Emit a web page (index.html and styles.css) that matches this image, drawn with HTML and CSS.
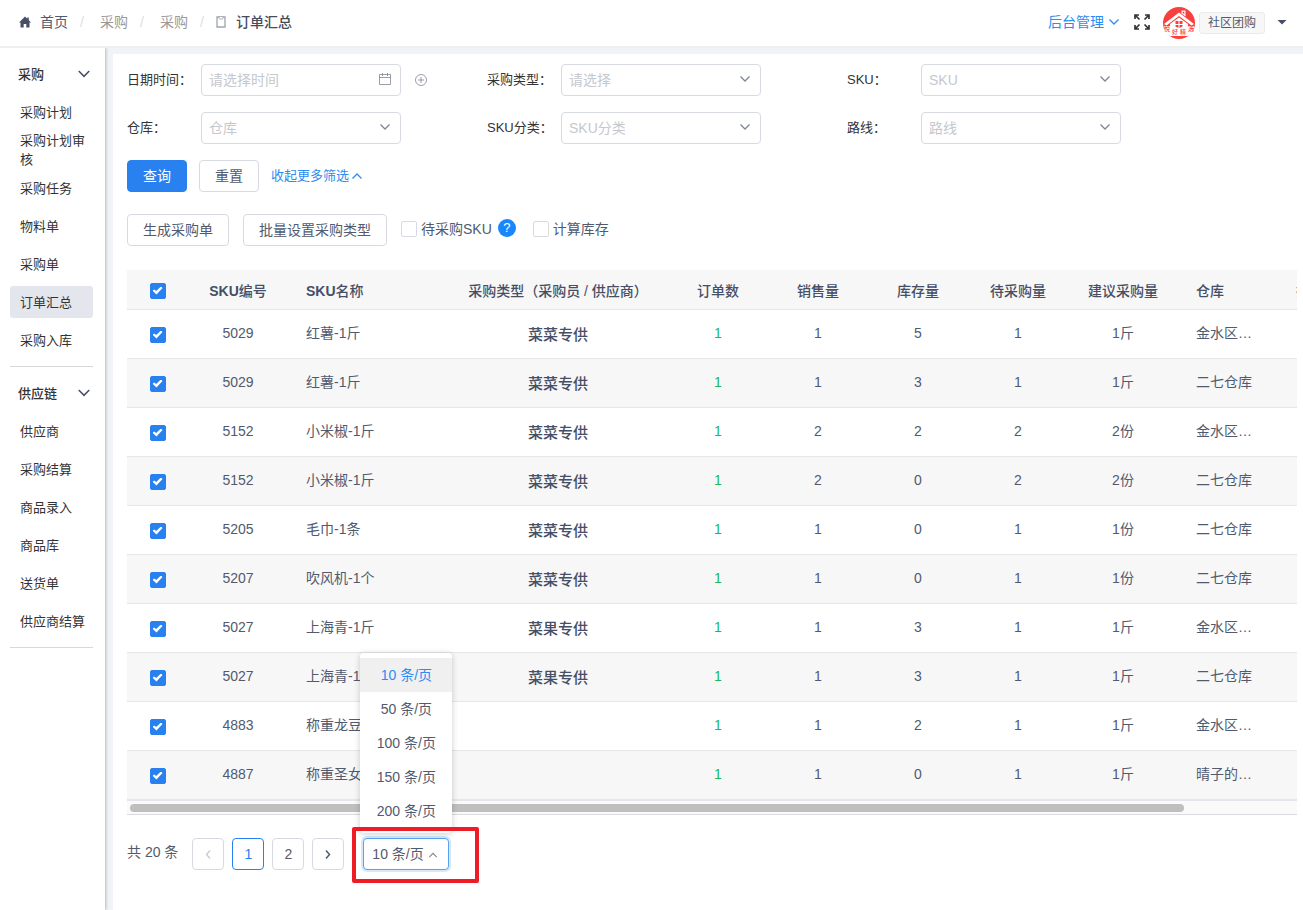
FILE: index.html
```html
<!DOCTYPE html>
<html lang="zh-CN">
<head>
	<meta charset="UTF-8">
	<meta name="viewport" content="width=device-width, initial-scale=1">
	<title>订单汇总</title>
	<link rel="stylesheet" href="styles.css">
</head>
<body>
	<!-- 公用图标 -->
	<svg class="sprite" aria-hidden="true">
		<symbol id="down" viewBox="0 0 12 12"><path d="M1.500 3.500 6 8l4.500-4.500" fill="none" stroke="currentColor" stroke-width="1.300"/></symbol>
		<symbol id="up" viewBox="0 0 12 12"><path d="M1.500 8.500 6 4l4.500 4.500" fill="none" stroke="currentColor" stroke-width="1.300"/></symbol>
	</svg>

	<!-- 顶部 -->
	<header class="header">
		<nav class="crumb">
			<svg class="home" viewBox="0 0 12 12"><path d="M6 .5 0 6.500h1.500V11.500h3.200V8h2.600v3.500h3.200v-5H12L9.800 4.300V1.500H8.300v1.300z" fill="currentColor"/></svg>
			<a href="#">首页</a>
			<i>/</i>
			<a href="#" class="gray">采购</a>
			<i>/</i>
			<a href="#" class="gray">采购</a>
			<i>/</i>
			<svg class="clip" viewBox="0 0 10 12"><path d="M1 1h8v10H1z" fill="none" stroke="currentColor" stroke-width="1.300"/><path d="M2.500.5h5L6.500 3h-3z" fill="#fff" stroke="currentColor" stroke-width=".8"/></svg>
			<span class="now">订单汇总</span>
		</nav>
		<div class="user">
			<a href="#" class="admin">后台管理 <svg class="ico"><use href="#down"/></svg></a>
			<button type="button" class="full" aria-label="全屏">
				<svg viewBox="0 0 16 16"><path d="M5 1H1v4M1 1l4.500 4.500M11 1h4v4M15 1l-4.500 4.500M5 15H1v-4M1 15l4.500-4.500M11 15h4v-4M15 15l-4.500-4.500" fill="none" stroke="currentColor" stroke-width="1.700"/></svg>
			</button>
			<svg class="logo" viewBox="0 0 32 32">
				<circle cx="16" cy="16" r="16" fill="#f8403e"/>
				<path d="M1 17 16 5.500 31 17l-2.500 1.500L16 9 3.500 18.500z" fill="#fff"/>
				<path d="M18.500 3.500h4v6l-4-3z" fill="#fff"/>
				<path d="M19.700 4.700h1.600v2.600l-1.600-1.200z" fill="#f8403e"/>
				<path d="M7 17 16 10.500 25 17v9H7z" fill="#fff"/>
				<path d="M1 19h7v2h16v-2h7l-1 7-5 3H7l-5-3z" fill="#fff"/>
				<path d="M12.500 14h3v3h-3zM16.500 14h3v3h-3zM12.500 18h3v3l-3-1.500zM16.500 18h3v1.500l-3 1.500z" fill="#f8403e"/>
				<g class="logo-text"><text x="1" y="24">悦</text><text x="9" y="27">好</text><text x="17" y="27">精</text><text x="25" y="24">选</text></g>
			</svg>
			<span class="tag">社区团购</span>
			<button type="button" class="caret" aria-label="更多"></button>
		</div>
	</header>

	<div class="wrap">
		<!-- 左侧菜单 -->
		<aside class="side">
			<div class="group">
				<h3>采购 <svg class="ico"><use href="#down"/></svg></h3>
				<ul>
					<li><a href="#">采购计划</a></li>
					<li><a href="#">采购计划审核</a></li>
					<li><a href="#">采购任务</a></li>
					<li><a href="#">物料单</a></li>
					<li><a href="#">采购单</a></li>
					<li><a href="#" class="active">订单汇总</a></li>
					<li><a href="#">采购入库</a></li>
				</ul>
			</div>
			<div class="group">
				<h3>供应链 <svg class="ico"><use href="#down"/></svg></h3>
				<ul>
					<li><a href="#">供应商</a></li>
					<li><a href="#">采购结算</a></li>
					<li><a href="#">商品录入</a></li>
					<li><a href="#">商品库</a></li>
					<li><a href="#">送货单</a></li>
					<li><a href="#">供应商结算</a></li>
				</ul>
			</div>
		</aside>

		<main class="main">
			<!-- 筛选 -->
			<form class="filter">
				<div class="field">
					<label for="date">日期时间：</label>
					<div class="ctrl">
						<input type="text" id="date" placeholder="请选择时间" autocomplete="off">
						<svg class="ico cal" viewBox="0 0 12 12"><path d="M.5 1.500h11v10H.5zM.5 4.500h11M3.500 0v3M8.500 0v3" fill="none" stroke="currentColor" stroke-width=".8"/></svg>
					</div>
					<button type="button" class="plus" aria-label="添加"><svg viewBox="0 0 12 12"><circle cx="6" cy="6" r="5.500" fill="none" stroke="currentColor" stroke-width=".8"/><path d="M6 3v6M3 6h6" stroke="currentColor" stroke-width=".8"/></svg></button>
				</div>
				<div class="field">
					<label for="type">采购类型：</label>
					<div class="ctrl"><select id="type"><option>请选择</option></select><svg class="ico"><use href="#down"/></svg></div>
				</div>
				<div class="field">
					<label for="sku">SKU：</label>
					<div class="ctrl"><select id="sku"><option>SKU</option></select><svg class="ico"><use href="#down"/></svg></div>
				</div>
				<div class="field">
					<label for="store">仓库：</label>
					<div class="ctrl"><select id="store"><option>仓库</option></select><svg class="ico"><use href="#down"/></svg></div>
				</div>
				<div class="field">
					<label for="cate">SKU分类：</label>
					<div class="ctrl"><select id="cate"><option>SKU分类</option></select><svg class="ico"><use href="#down"/></svg></div>
				</div>
				<div class="field">
					<label for="line">路线：</label>
					<div class="ctrl"><select id="line"><option>路线</option></select><svg class="ico"><use href="#down"/></svg></div>
				</div>
			</form>
			<div class="search">
				<button type="button" class="btn primary">查询</button>
				<button type="button" class="btn">重置</button>
				<a href="#" class="more">收起更多筛选<svg class="ico"><use href="#up"/></svg></a>
			</div>

			<!-- 操作 -->
			<div class="action">
				<button type="button" class="btn">生成采购单</button>
				<button type="button" class="btn">批量设置采购类型</button>
				<div class="checks">
					<label><input type="checkbox">待采购SKU</label>
					<span class="help">?</span>
					<label><input type="checkbox">计算库存</label>
				</div>
			</div>

			<!-- 列表 -->
			<div class="table-box">
				<table>
					<colgroup>
						<col class="w-check"><col class="w-num"><col class="w-name"><col class="w-type"><col class="w-num"><col class="w-num"><col class="w-num"><col class="w-num"><col class="w-advice"><col class="w-num"><col>
					</colgroup>
					<thead>
						<tr>
							<th><input type="checkbox" aria-label="全选" checked></th>
							<th><b>SKU</b>编号</th>
							<th class="left"><b>SKU</b>名称</th>
							<th>采购类型（采购员 / 供应商）</th>
							<th>订单数</th>
							<th>销售量</th>
							<th>库存量</th>
							<th>待采购量</th>
							<th>建议采购量</th>
							<th class="left">仓库</th>
							<th class="left">操作</th>
						</tr>
					</thead>
					<tbody>
						<tr><td><input type="checkbox" aria-label="选择" checked></td><td>5029</td><td class="left">红薯-1斤</td><td class="type">菜菜专供</td><td class="green">1</td><td>1</td><td>5</td><td>1</td><td>1斤</td><td class="left">金水区…</td><td></td></tr>
						<tr><td><input type="checkbox" aria-label="选择" checked></td><td>5029</td><td class="left">红薯-1斤</td><td class="type">菜菜专供</td><td class="green">1</td><td>1</td><td>3</td><td>1</td><td>1斤</td><td class="left">二七仓库</td><td></td></tr>
						<tr><td><input type="checkbox" aria-label="选择" checked></td><td>5152</td><td class="left">小米椒-1斤</td><td class="type">菜菜专供</td><td class="green">1</td><td>2</td><td>2</td><td>2</td><td>2份</td><td class="left">金水区…</td><td></td></tr>
						<tr><td><input type="checkbox" aria-label="选择" checked></td><td>5152</td><td class="left">小米椒-1斤</td><td class="type">菜菜专供</td><td class="green">1</td><td>2</td><td>0</td><td>2</td><td>2份</td><td class="left">二七仓库</td><td></td></tr>
						<tr><td><input type="checkbox" aria-label="选择" checked></td><td>5205</td><td class="left">毛巾-1条</td><td class="type">菜菜专供</td><td class="green">1</td><td>1</td><td>0</td><td>1</td><td>1份</td><td class="left">二七仓库</td><td></td></tr>
						<tr><td><input type="checkbox" aria-label="选择" checked></td><td>5207</td><td class="left">吹风机-1个</td><td class="type">菜菜专供</td><td class="green">1</td><td>1</td><td>0</td><td>1</td><td>1份</td><td class="left">二七仓库</td><td></td></tr>
						<tr><td><input type="checkbox" aria-label="选择" checked></td><td>5027</td><td class="left">上海青-1斤</td><td class="type">菜果专供</td><td class="green">1</td><td>1</td><td>3</td><td>1</td><td>1斤</td><td class="left">金水区…</td><td></td></tr>
						<tr><td><input type="checkbox" aria-label="选择" checked></td><td>5027</td><td class="left">上海青-1斤</td><td class="type">菜果专供</td><td class="green">1</td><td>1</td><td>3</td><td>1</td><td>1斤</td><td class="left">二七仓库</td><td></td></tr>
						<tr><td><input type="checkbox" aria-label="选择" checked></td><td>4883</td><td class="left">称重龙豆</td><td></td><td class="green">1</td><td>1</td><td>2</td><td>1</td><td>1斤</td><td class="left">金水区…</td><td></td></tr>
						<tr><td><input type="checkbox" aria-label="选择" checked></td><td>4887</td><td class="left">称重圣女</td><td></td><td class="green">1</td><td>1</td><td>0</td><td>1</td><td>1斤</td><td class="left">晴子的…</td><td></td></tr>
					</tbody>
				</table>
			</div>
			<div class="scroll"><div class="thumb"></div></div>

			<!-- 分页 -->
			<div class="pager">
				<span class="total">共 20 条</span>
				<button type="button" class="page off" aria-label="上一页" disabled><svg viewBox="0 0 12 12"><path d="M8 2.500 4.500 6.500 8 10.500" fill="none" stroke="currentColor" stroke-width="1.200"/></svg></button>
				<button type="button" class="page on">1</button>
				<button type="button" class="page">2</button>
				<button type="button" class="page" aria-label="下一页"><svg viewBox="0 0 12 12"><path d="M4 2.500 7.500 6.500 4 10.500" fill="none" stroke="currentColor" stroke-width="1.500"/></svg></button>
				<div class="size">
					<select aria-label="每页条数"><option>10 条/页</option><option>50 条/页</option><option>100 条/页</option><option>150 条/页</option><option>200 条/页</option></select>
					<svg class="ico"><use href="#up"/></svg>
					<ul class="menu">
						<li class="active">10 条/页</li>
						<li>50 条/页</li>
						<li>100 条/页</li>
						<li>150 条/页</li>
						<li>200 条/页</li>
					</ul>
					<div class="mark"></div>
				</div>
			</div>
		</main>
	</div>
</body>
</html>
```

FILE: styles.css
```css
*{box-sizing:border-box;}
ul,h3{list-style:none;margin:0;padding:0;}
a{color:inherit;text-decoration:none;}
i{font-style:normal;}
body{display:flex;flex-direction:column;min-height:100vh;margin:0;background:#f0f4f8;color:#515a6e;font:14px/20px "Liberation Sans","Noto Sans CJK SC",sans-serif;overflow-x:hidden;}
button,input,select{font:inherit;color:inherit;margin:0;}
button{cursor:pointer;}
.sprite{position:absolute;width:0;height:0;}
.ico{width:12px;height:12px;flex:none;}

/* 顶部 */
.header{display:flex;justify-content:space-between;align-items:center;height:48px;padding:0 16px 2px 19px;background:#fff;border-bottom:2px solid #efefef;}
.crumb,.user{display:flex;align-items:center;}
.crumb i{width:32px;text-align:center;color:#dcdee2;padding-right:4px;}
.crumb .home{width:12px;height:12px;margin-right:9px;color:#464f66;}
.crumb .gray{color:#999;}
.crumb .clip{width:10px;height:12px;margin:0 10px 0 -4px;color:#a0a4ad;}
.crumb .now{font-weight:500;color:#464c5b;}
.admin{display:flex;align-items:center;gap:4px;color:#2d8cf0;}
.full{width:16px;height:16px;margin:0 13px 0 14px;padding:0;border:0;background:none;color:#333;}
.full svg{display:block;}
.logo{width:32px;height:32px;margin-top:2px;}
.logo-text{fill:#f8403e;font-size:6px;font-weight:500;}
.tag{height:22px;margin:2px 12px 0 4px;padding:0 8px;border:1px solid #e8eaec;border-radius:3px;background:#f7f7f7;font-size:12px;line-height:20px;}
.caret{width:10px;height:5px;padding:0;border:0;background:#464f66;clip-path:polygon(0 0,100% 0,50% 100%);}

/* 左侧菜单 */
.wrap{display:flex;flex:1;}
.side{flex:none;width:105px;padding:0 12px 0 10px;background:#fff;box-shadow:1px 0 3px rgba(0,0,0,.25);clip-path:inset(0 -5px 0 0);font-size:13px;line-height:19px;color:#333;}
.group{padding-bottom:4px;border-bottom:1px solid #d8d8d8;}
.group h3{display:flex;justify-content:space-between;align-items:center;height:48px;padding:4px 2px 0 8px;font-size:13px;font-weight:500;}
.group h3 .ico{width:14px;height:14px;color:#464f66;}
.group a{display:flex;align-items:center;height:32px;margin-bottom:6px;padding:0 8px 0 10px;border-radius:3px;}
.group a.active{background:#e4e6ee;}

/* 内容 */
.main{flex:1;min-width:0;margin:6px 0 0 8px;padding:10px 6px 0 14px;background:#fff;}
.filter{display:grid;grid-template-columns:repeat(3,360px);gap:16px 0;}
.field{display:flex;align-items:center;}
.field label{width:74px;font-size:13px;color:#333;}
.ctrl{position:relative;width:200px;}
.ctrl input,.ctrl select{display:block;width:100%;height:32px;padding:0 7px;border:1px solid #d7dae0;border-radius:4px;background:#fff;color:#c5c8ce;appearance:none;}
.ctrl input::placeholder{color:#c5c8ce;}
.ctrl .ico{position:absolute;top:9px;right:10px;color:#808695;pointer-events:none;}
.plus{width:12px;height:12px;margin-left:14px;padding:0;border:0;background:none;color:#808695;}
.plus svg{display:block;}
.search{display:flex;align-items:center;gap:12px;margin-top:16px;}
.btn{height:32px;padding:0 15px;border:1px solid #d7dae0;border-radius:4px;background:#fff;}
.btn.primary{border-color:#2981f0;background:#2981f0;color:#fff;}
.more{display:flex;align-items:center;gap:2px;font-size:13px;color:#2d8cf0;}
.action{display:flex;align-items:center;gap:14px;margin-top:22px;}
.checks{display:flex;align-items:center;padding-bottom:2px;}
.checks label{display:flex;align-items:center;gap:4px;}
.help{width:18px;height:18px;margin:0 17px 2px 6px;border-radius:50%;background:#1a86fc;color:#fff;font-size:13px;line-height:18px;text-align:center;}
input[type=checkbox]{display:block;width:16px;height:16px;border:1px solid #d7dae0;border-radius:2px;background:#fff;appearance:none;}
input[type=checkbox]:checked{border-color:#2981f0;background:#2981f0;}
input[type=checkbox]:checked::after{content:"";display:block;width:10px;height:8px;margin:3px 2px;background:#fff;clip-path:polygon(0 53%,16% 36%,37% 56%,84% 0,100% 18%,40% 100%);}

/* 列表 */
.table-box{margin-top:24px;overflow:hidden;}
table{width:1300px;table-layout:fixed;border-collapse:separate;border-spacing:0;}
.w-check{width:61px;}
.w-num{width:100px;}
.w-name{width:160px;}
.w-type{width:220px;}
.w-advice{width:110px;}
th,td{padding:0;border-bottom:1px solid #e4e6e9;text-align:center;white-space:nowrap;}
th{height:40px;padding-top:2px;background:#f7f7f7;font-weight:500;color:#464f66;}
th b{font-weight:700;}
td{height:49px;padding-bottom:2px;}
td:first-child,td.type{padding:1px 0 0;}
tr:nth-child(even) td{background:#f7f7f7;}
th.left,td.left{padding-left:18px;text-align:left;}
th input[type=checkbox],td input[type=checkbox]{margin:0 auto;}
td.type{font-size:15px;font-weight:500;color:#464f66;}
td.green{color:#19b955;}
.scroll{height:15px;padding:3px 3px 0;border-top:1px solid #e4e6e9;border-bottom:1px solid #d8dadd;background:#fafafa;}
.thumb{width:calc(90% + 6px);height:8px;border-radius:4px;background:#bfbfbf;}

/* 分页 */
.pager{display:flex;align-items:center;gap:8px;margin-top:23px;}
.total{margin-right:6px;padding-bottom:4px;}
.page{display:flex;justify-content:center;align-items:center;width:32px;height:32px;padding:0;border:1px solid #d7dae0;border-radius:4px;background:#fff;}
.page svg{width:12px;height:12px;}
.page.on{border-color:#2981f0;color:#2981f0;}
.page.off{color:#c5c8ce;}
.size{position:relative;margin-left:11px;}
.size select{display:block;width:86px;height:32px;padding:0 8px;border:1px solid #57a3f3;border-radius:4px;background:#fff;box-shadow:0 0 0 2px rgba(45,140,240,.2);appearance:none;}
.size .ico{position:absolute;top:12px;right:11px;width:10px;height:10px;color:#808695;pointer-events:none;}
.menu{position:absolute;bottom:37px;left:-3px;width:92px;padding:5px 0;border-radius:4px;background:#fff;box-shadow:0 1px 6px rgba(0,0,0,.2);}
.menu li{height:34px;line-height:34px;text-align:center;}
.menu .active{background:#f0f0f0;color:#2d8cf0;}
.mark{position:absolute;inset:-11px -30px -13px -11px;border:4px solid #ee1c25;border-radius:2px;pointer-events:none;}
```
